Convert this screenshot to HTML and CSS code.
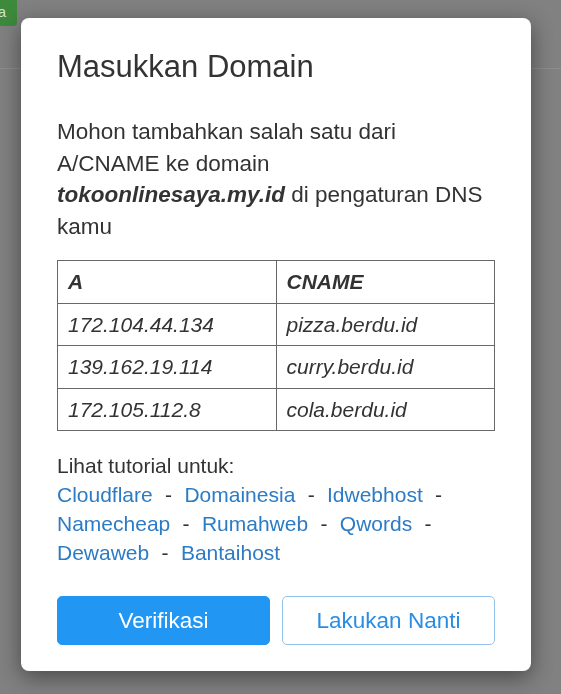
FILE: index.html
```html
<!DOCTYPE html>
<html lang="id">
<head>
<meta charset="utf-8">
<title>Masukkan Domain</title>
<link rel="stylesheet" href="styles.css">
</head>
<body>
<div class="page">
  <header class="topbar">
    <span class="green-btn"><span class="green-text">Simpan Data</span></span>
  </header>
</div>
<div class="overlay">
  <div class="modal">
    <h4 class="modal-title">Masukkan Domain</h4>
    <p class="intro">Mohon tambahkan salah satu dari A/CNAME ke domain <b><i>tokoonlinesaya.my.id</i></b> di pengaturan DNS kamu</p>
    <table class="dns">
      <thead>
        <tr><th>A</th><th>CNAME</th></tr>
      </thead>
      <tbody>
        <tr><td>172.104.44.134</td><td>pizza.berdu.id</td></tr>
        <tr><td>139.162.19.114</td><td>curry.berdu.id</td></tr>
        <tr><td>172.105.112.8</td><td>cola.berdu.id</td></tr>
      </tbody>
    </table>
    <div class="tutorial">
      <div>Lihat tutorial untuk:</div>
      <div class="links"><a href="#">Cloudflare</a> <span class="sep">-</span> <a href="#">Domainesia</a> <span class="sep">-</span> <a href="#">Idwebhost</a> <span class="sep">-</span> <a href="#">Namecheap</a> <span class="sep">-</span> <a href="#">Rumahweb</a> <span class="sep">-</span> <a href="#">Qwords</a> <span class="sep">-</span> <a href="#">Dewaweb</a> <span class="sep">-</span> <a href="#">Bantaihost</a></div>
    </div>
    <div class="actions">
      <button class="btn btn-primary" type="button">Verifikasi</button>
      <button class="btn btn-outline" type="button">Lakukan Nanti</button>
    </div>
  </div>
</div>
</body>
</html>
```

FILE: styles.css
```css
* { box-sizing: border-box; }

html, body {
  margin: 0;
  padding: 0;
  height: 100%;
}

body {
  background: #818181;
  font-family: "Liberation Sans", Arial, sans-serif;
  color: #333333;
  overflow: hidden;
}

.page {
  height: 100%;
}

.topbar {
  height: 69px;
  border-bottom: 1px solid #8d8d8d;
  display: flex;
  align-items: flex-start;
}

.green-btn {
  display: block;
  width: 17px;
  height: 26px;
  background: #3d8a3d;
  border-bottom-right-radius: 4px;
  overflow: hidden;
  position: relative;
}

.green-text {
  position: absolute;
  right: 11px;
  top: 3px;
  font-size: 15px;
  white-space: nowrap;
  color: #cfe3cf;
}

.overlay {
  position: fixed;
  inset: 0;
  padding: 18px 0 0 21px;
}

.modal {
  width: 510px;
  background: #ffffff;
  border-radius: 8px;
  padding: 32px 36px 26px;
  box-shadow: 0 6px 22px rgba(0, 0, 0, 0.45);
}

.modal-title {
  margin: 0;
  font-size: 31px;
  line-height: 33px;
  font-weight: normal;
  color: #333333;
}

.intro {
  margin: 33px 0 18px;
  font-size: 22.5px;
  line-height: 31.5px;
}

.intro b {
  font-weight: bold;
}

.dns {
  width: 100%;
  table-layout: fixed;
  border-collapse: collapse;
  font-size: 21px;
  line-height: 29.5px;
  font-style: italic;
}

.dns th,
.dns td {
  border: 1px solid #686868;
  padding: 6px 10px;
  text-align: left;
}

.dns th {
  font-weight: bold;
}

.tutorial {
  margin-top: 20px;
  font-size: 21px;
  line-height: 29px;
}

.links a {
  color: #2c7bc5;
  text-decoration: none;
}

.sep {
  margin: 0 6.5px;
  color: #333333;
}

.actions {
  margin-top: 29px;
  display: flex;
  gap: 12px;
}

.btn {
  flex: 1;
  height: 49px;
  font-family: "Liberation Sans", Arial, sans-serif;
  font-size: 22.5px;
  border-radius: 5px;
  cursor: pointer;
}

.btn-primary {
  background: #2196f3;
  border: 1px solid #2196f3;
  color: #ffffff;
}

.btn-outline {
  background: #ffffff;
  border: 1px solid #93c3ec;
  color: #2a8de4;
}
```
